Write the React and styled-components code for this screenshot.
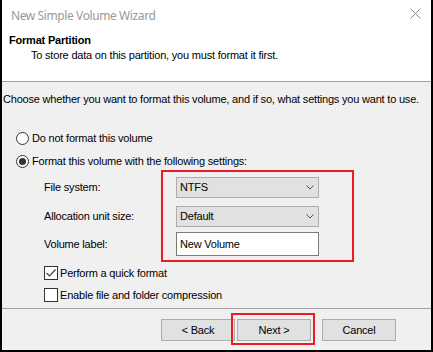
import React from 'react';
import styled, { createGlobalStyle } from 'styled-components';

const Global = createGlobalStyle`
  html, body { margin: 0; padding: 0; background: #fff; }
  * { box-sizing: border-box; }
`;

const Window = styled.div`
  width: 433px;
  height: 352px;
  display: flex;
  flex-direction: column;
  border: 2px solid #000;
  border-top: none;
  background: #f0f0f0;
  font-family: "Liberation Sans", Arial, sans-serif;
  font-size: 11px;
  line-height: 13px;
  letter-spacing: -0.2px;
  white-space: nowrap;
  color: #000;
`;

const Header = styled.header`
  flex: none;
  height: 82px;
  background: #fff;
  border-bottom: 1px solid #a0a0a0;
`;

const TitleBar = styled.div`
  height: 30px;
  display: flex;
  align-items: center;
  justify-content: space-between;
  padding: 0 10px 0 9px;
  font-family: "Noto Sans", sans-serif;
  font-size: 12px;
  letter-spacing: -0.4px;
  color: #999;
`;

const CloseIcon = styled.svg`
  align-self: flex-start;
  margin-top: 8px;
`;

const HeaderText = styled.div`
  padding: 4px 0 0 7px;
`;

const Headline = styled.div`
  font-weight: bold;
`;

const Subline = styled.div`
  margin-top: 2px;
  padding-left: 22px;
`;

const Body = styled.main`
  flex: 1;
  min-height: 0;
  padding: 11px 0 0 1px;
`;

const Intro = styled.div``;

const RadioList = styled.div`
  margin-top: 26px;
  padding-left: 13px;
  display: flex;
  flex-direction: column;
  gap: 10px;
`;

const OptionRow = styled.label`
  display: flex;
  align-items: center;
  gap: 3px;
  height: 13px;
`;

const RadioCircle = styled.span`
  width: 13px;
  height: 13px;
  border-radius: 50%;
  border: 1px solid #333;
  background: #fff;
  display: flex;
  align-items: center;
  justify-content: center;
  &::after {
    content: "";
    width: 7px;
    height: 7px;
    border-radius: 50%;
    background: ${p => (p.$checked ? '#333' : 'transparent')};
  }
`;

const Settings = styled.div`
  margin: 2px 0 0 41px;
  display: flex;
`;

const LabelCol = styled.div`
  width: 117px;
  padding-top: 7px;
  display: flex;
  flex-direction: column;
`;

const FieldLabel = styled.div`
  height: ${p => p.$h}px;
  margin-bottom: ${p => p.$gap}px;
  display: flex;
  align-items: center;
`;

const HighlightBox = styled.div`
  width: 193px;
  border: 2px solid #ec1c24;
  padding: 5px 33px 4px 13px;
  display: flex;
  flex-direction: column;
`;

const Combo = styled.div`
  height: 21px;
  width: 143px;
  margin-bottom: ${p => p.$gap}px;
  background: #e1e1e1;
  border: 1px solid #adadad;
  display: flex;
  align-items: center;
  justify-content: space-between;
  padding: 0 4px 0 3px;
`;

const TextInput = styled.div`
  height: 24px;
  width: 143px;
  background: #fff;
  border: 1px solid #7a7a7a;
  display: flex;
  align-items: center;
  padding-left: 3px;
`;

const CheckList = styled.div`
  margin: 4px 0 0 41px;
  display: flex;
  flex-direction: column;
  gap: 8px;
`;

const CheckRow = styled.label`
  display: flex;
  align-items: center;
  gap: 2px;
  height: 14px;
`;

const CheckBox = styled.span`
  width: 14px;
  height: 14px;
  border: 1px solid #333;
  background: #fff;
  display: flex;
  align-items: center;
  justify-content: center;
`;

const Footer = styled.footer`
  flex: none;
  height: 42px;
  border-top: 1px solid #a0a0a0;
  padding: 10px 35px 0 0;
  display: flex;
  justify-content: flex-end;
  align-items: flex-start;
`;

const Button = styled.div`
  position: relative;
  width: 74px;
  height: 22px;
  margin-left: ${p => p.$gap || 0}px;
  background: #e1e1e1;
  border: 1px solid #adadad;
  display: flex;
  align-items: center;
  justify-content: center;
`;

const ButtonHighlight = styled.span`
  position: absolute;
  top: -7px;
  left: -7px;
  right: -5px;
  bottom: -5px;
  border: 2px solid #ec1c24;
  pointer-events: none;
`;

const Chevron = () => (
  <svg width="8" height="5" viewBox="0 0 8 5">
    <path d="M0.5 0.5 L4 4 L7.5 0.5" fill="none" stroke="#555" strokeWidth="1" />
  </svg>
);

const Check = () => (
  <svg width="12" height="12" viewBox="0 0 12 12">
    <path d="M1.5 6 L4.5 9 L10.5 2.5" fill="none" stroke="#444" strokeWidth="1.2" />
  </svg>
);

export default function App() {
  return (
    <>
      <Global />
      <Window>
        <Header>
          <TitleBar>
            <span>New Simple Volume Wizard</span>
            <CloseIcon width="11" height="11" viewBox="0 0 11 11">
              <path d="M0.5 0.5 L10.5 10.5 M10.5 0.5 L0.5 10.5" stroke="#8a8a8a" strokeWidth="1" />
            </CloseIcon>
          </TitleBar>
          <HeaderText>
            <Headline>Format Partition</Headline>
            <Subline>To store data on this partition, you must format it first.</Subline>
          </HeaderText>
        </Header>
        <Body>
          <Intro>Choose whether you want to format this volume, and if so, what settings you want to use.</Intro>
          <RadioList>
            <OptionRow>
              <RadioCircle />
              Do not format this volume
            </OptionRow>
            <OptionRow>
              <RadioCircle $checked />
              Format this volume with the following settings:
            </OptionRow>
          </RadioList>
          <Settings>
            <LabelCol>
              <FieldLabel $h={21} $gap={8}>File system:</FieldLabel>
              <FieldLabel $h={21} $gap={5}>Allocation unit size:</FieldLabel>
              <FieldLabel $h={24} $gap={0}>Volume label:</FieldLabel>
            </LabelCol>
            <HighlightBox>
              <Combo $gap={8}>NTFS<Chevron /></Combo>
              <Combo $gap={5}>Default<Chevron /></Combo>
              <TextInput>New Volume</TextInput>
            </HighlightBox>
          </Settings>
          <CheckList>
            <CheckRow>
              <CheckBox><Check /></CheckBox>
              Perform a quick format
            </CheckRow>
            <CheckRow>
              <CheckBox />
              Enable file and folder compression
            </CheckRow>
          </CheckList>
        </Body>
        <Footer>
          <Button>&lt; Back</Button>
          <Button $gap={2}>Next &gt;<ButtonHighlight /></Button>
          <Button $gap={11}>Cancel</Button>
        </Footer>
      </Window>
    </>
  );
}
